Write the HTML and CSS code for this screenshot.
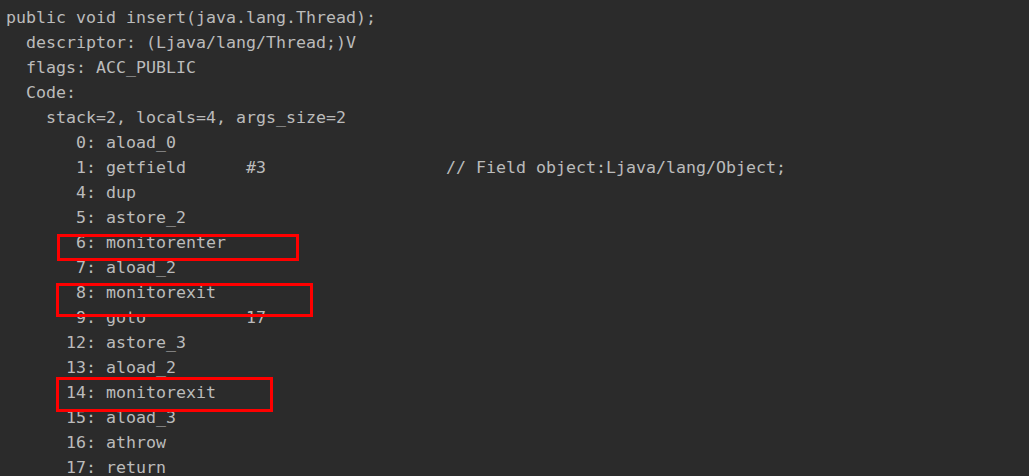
FILE: index.html
```html
<!DOCTYPE html>
<html>
<head>
<meta charset="utf-8">
<link rel="stylesheet" href="styles.css">
</head>
<body>
<div class="console">
<pre class="code">public void insert(java.lang.Thread);
  descriptor: (Ljava/lang/Thread;)V
  flags: ACC_PUBLIC
  Code:
    stack=2, locals=4, args_size=2
       0: aload_0
       1: getfield      #3                  // Field object:Ljava/lang/Object;
       4: dup
       5: astore_2
       6: monitorenter
       7: aload_2
       8: monitorexit
       9: goto          17
      12: astore_3
      13: aload_2
      14: monitorexit
      15: aload_3
      16: athrow
      17: return</pre>
<div class="mark mark-enter"></div>
<div class="mark mark-exit1"></div>
<div class="mark mark-exit2"></div>
</div>
</body>
</html>
```
FILE: styles.css
```css
html, body {
  margin: 0;
  padding: 0;
  height: 100%;
  overflow: hidden;
  background: #2b2b2b;
}
.console {
  position: relative;
  height: 476px;
  padding: 5px 0 0 6px;
  box-sizing: border-box;
}
.code {
  margin: 0;
  font-family: "DejaVu Sans Mono", "Liberation Mono", monospace;
  font-size: 16.62px;
  line-height: 25px;
  color: #bbbbbb;
}
.mark {
  position: absolute;
  border: 3px solid #ff0000;
  box-sizing: border-box;
}
.mark-enter {
  left: 57px;
  top: 234px;
  width: 242px;
  height: 27px;
}
.mark-exit1 {
  left: 56px;
  top: 283px;
  width: 257px;
  height: 34px;
}
.mark-exit2 {
  left: 56px;
  top: 377px;
  width: 217px;
  height: 35px;
}
```
